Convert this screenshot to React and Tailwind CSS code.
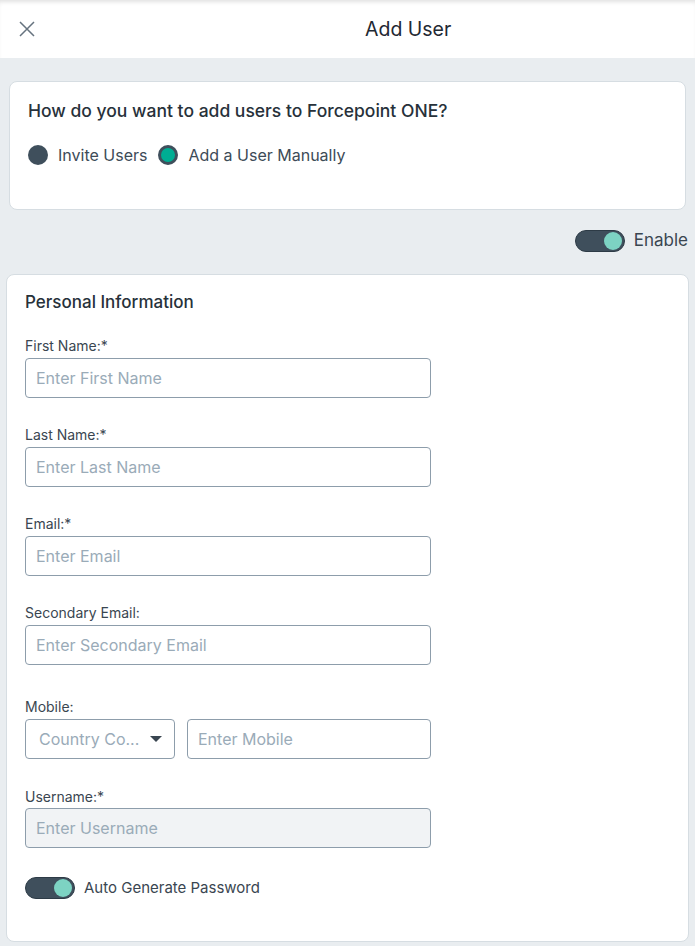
const FIELDS = [
  { label: "First Name:*", placeholder: "Enter First Name" },
  { label: "Last Name:*", placeholder: "Enter Last Name" },
  { label: "Email:*", placeholder: "Enter Email" },
  { label: "Secondary Email:", placeholder: "Enter Secondary Email" },
];

function Toggle() {
  return (
    <span className="flex h-[22px] w-[50px] items-center justify-end rounded-full border border-[#2d3b46] bg-[#3f4f5c] px-[2px]">
      <span className="h-[18px] w-[18px] rounded-full bg-[#7dd3c3]" />
    </span>
  );
}

function Field({ label, placeholder }) {
  return (
    <div className="mb-[27px]">
      <p className="mb-[2px] text-[14px] leading-[20px] text-[#3a4651]">{label}</p>
      <div className="flex h-10 w-[406px] items-center rounded border border-[#8d9dab] px-[10px] text-[16px] text-[#9aabb8]">
        {placeholder}
      </div>
    </div>
  );
}

export default function App() {
  return (
    <div className="min-h-[946px] bg-[#e9edf0] font-['Inter',sans-serif] text-[#28323b]">
      <header className="relative flex h-[58px] items-center bg-white shadow-[inset_0_4px_4px_-2px_rgba(0,0,0,0.12)]">
        <svg className="ml-[19px]" width="16" height="16" viewBox="0 0 16 16">
          <path d="M1 1L15 15M15 1L1 15" stroke="#66737f" strokeWidth="1.5" />
        </svg>
        <h1 className="absolute left-[365px] top-[15px] text-[19.5px] text-[#1f2933]">Add User</h1>
      </header>

      <div className="px-[9px] pt-[23px]">
        <section className="h-[129px] rounded-lg border border-[#d6dde2] bg-white px-[18px] pt-[16px]">
          <h2 className="text-[17.5px] font-medium text-[#27313a]">How do you want to add users to Forcepoint ONE?</h2>
          <div className="mt-[19px] flex items-center text-[16px] text-[#3d4b57]">
            <span className="h-5 w-5 rounded-full bg-[#3f4f5c]" />
            <span className="ml-[10px]">Invite Users</span>
            <span className="ml-[11px] h-5 w-5 rounded-full border-[3px] border-[#3f4f5c] bg-[#00ad93]" />
            <span className="ml-[10px]">Add a User Manually</span>
          </div>
        </section>
      </div>

      <div className="mt-[20px] flex h-[22px] items-center justify-end pr-[7px]">
        <Toggle />
        <span className="ml-[9px] text-[17px] text-[#3a4651]">Enable</span>
      </div>

      <div className="px-[6px] pt-[22px]">
        <section className="h-[668px] rounded-lg border border-[#d6dde2] bg-white px-[18px] pt-[15px]">
          <h2 className="mb-[22px] text-[17px] leading-[24px] font-medium text-[#27313a]">Personal Information</h2>
          {FIELDS.map((f) => (
            <Field key={f.label} {...f} />
          ))}
          <div className="mb-[28px] mt-[32px]">
            <p className="mb-[2px] text-[14px] leading-[20px] text-[#3a4651]">Mobile:</p>
            <div className="flex gap-[12px]">
              <div className="flex h-10 w-[150px] items-center justify-between rounded border border-[#8d9dab] pl-[13px] pr-[12px] text-[16px] text-[#9aabb8]">
                <span>Country Co...</span>
                <span className="h-0 w-0 border-x-[6px] border-t-[6px] border-x-transparent border-t-[#3a4651]" />
              </div>
              <div className="flex h-10 w-[244px] items-center rounded border border-[#8d9dab] px-[10px] text-[16px] text-[#9aabb8]">
                Enter Mobile
              </div>
            </div>
          </div>
          <div>
            <p className="mb-[1px] text-[14px] leading-[20px] text-[#3a4651]">Username:*</p>
            <div className="flex h-10 w-[406px] items-center rounded border border-[#8d9dab] bg-[#f1f3f5] px-[10px] text-[16px] text-[#9aabb8]">
              Enter Username
            </div>
          </div>
          <div className="mt-[29px] flex h-[22px] items-center">
            <Toggle />
            <span className="ml-[9px] text-[15px] text-[#3a4651]">Auto Generate Password</span>
          </div>
        </section>
      </div>
    </div>
  );
}
